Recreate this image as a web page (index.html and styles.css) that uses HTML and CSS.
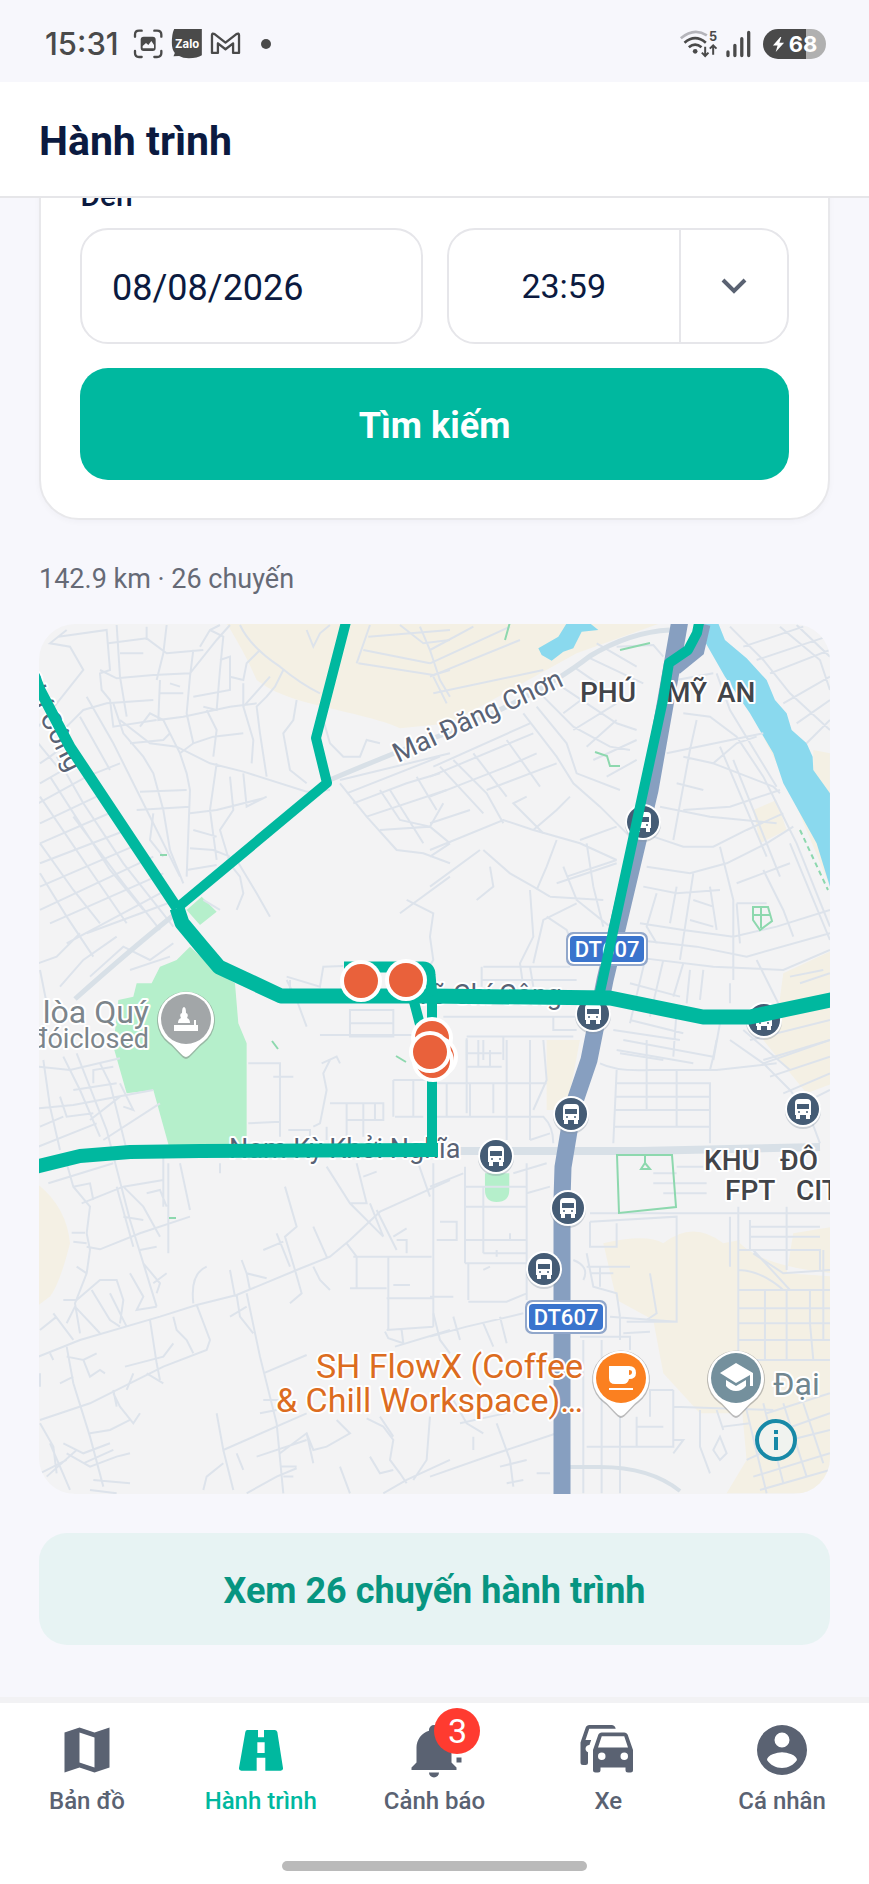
FILE: index.html
```html
<!DOCTYPE html>
<html lang="vi">
<head>
<meta charset="utf-8">
<meta name="viewport" content="width=device-width, initial-scale=1">
<title>Hành trình</title>
<link rel="stylesheet" href="styles.css">
</head>
<body>
<div class="status">
  <div class="status-group">
    <span class="clock">15:31</span>
    <svg class="ic-shot" viewBox="402 89 90 90" aria-hidden="true"><g fill="none" stroke="#4a4a4a" stroke-width="7" stroke-linecap="round"><path d="M408 112V106Q408 94 420 94H428M466 94H474Q487 94 487 106V112M487 155V161Q487 173 474 173H466M428 173H420Q408 173 408 161V155"/></g><rect x="425" y="112" width="45" height="43" rx="9" fill="#4a4a4a"/><path d="M431 147V140L441 131L448 137L457 125L465 137V147Z" fill="#f7f7fb"/></svg>
    <svg class="ic-zalo" viewBox="517 87 92 90" aria-hidden="true"><path d="M526 87H609V166Q596 175 570 175Q552 175 541 168L524 169L528 159Q519 148 519 128Q519 102 526 87Z" fill="#4a4a4a"/><text x="565" y="143" class="zalo-text">Zalo</text></svg>
    <svg class="ic-mail" viewBox="628 89 94 88" aria-hidden="true"><path d="M634 160V106Q634 99 642 103L675 129L708 103Q716 99 716 106V160H698V131L675 149L652 131V160Z" fill="none" stroke="#4a4a4a" stroke-width="7" stroke-linejoin="round"/></svg>
    <span class="more-dot"></span>
  </div>
  <div class="status-group status-right">
    <svg class="ic-wifi" viewBox="736 87 116 90" aria-hidden="true"><g fill="none" stroke-width="8"><path d="M741 115Q780 82 819 106" stroke="#b4b4ba"/><path d="M752 128Q784 101 816 128M765 142Q784 126 803 142" stroke="#4a4a4a"/><path d="M814 140V167M804 158L814 168L824 158M838 164V137M828 146L838 136L848 146" stroke="#4a4a4a" stroke-width="6"/></g><circle cx="784" cy="154" r="7" fill="#4a4a4a"/><text x="838" y="122" class="wifi-text">5</text></svg>
    <svg class="ic-signal" viewBox="876 87 76 90" aria-hidden="true"><path d="M882 156V167M903 136V167M924 116V167M945 97V167" stroke="#4a4a4a" stroke-width="10" stroke-linecap="round"/></svg>
    <span class="battery"><svg viewBox="0 0 14 18" aria-hidden="true"><path d="M9 1L1 10H6L4 17L13 7H8L10 1Z" fill="#fff"/></svg>68</span>
  </div>
</div>

<header class="header"><h1>Hành trình</h1></header>

<main class="main">
  <form class="card">
    <label class="label" for="to-date">Đến</label>
    <div class="fields">
      <input class="field date" id="to-date" type="text" value="08/08/2026">
      <div class="field time">
        <input class="time-input" type="text" value="23:59" aria-label="Giờ đến">
        <button class="time-toggle" type="button" aria-label="Chọn giờ"><svg viewBox="0 0 26 16"><path d="M2 2L13 13L24 2" fill="none" stroke="#5a6272" stroke-width="4"/></svg></button>
      </div>
    </div>
    <button class="search" type="button">Tìm kiếm</button>
  </form>

  <p class="summary">142.9 km · 26 chuyến</p>

  <section class="map" aria-label="Bản đồ hành trình">
    <svg class="map-canvas" viewBox="39 624 791 870">
      <defs>
        <g id="bus">
          <circle r="18" fill="#8795a4" opacity=".35" cy="2"/><circle r="18" fill="#fff"/><circle r="16" fill="#455c75"/>
          <path d="M-8 -6Q-8 -10 -4 -10H4Q8 -10 8 -6V6H7V10H3V6H-3V10H-7V6H-8Z" fill="#fff"/><rect x="-6" y="-5" width="12" height="5" fill="#455c75"/><circle cx="-4" cy="3" r="1" fill="#455c75"/><circle cx="4" cy="3" r="1" fill="#455c75"/>
        </g>
        <g id="pin"><path d="M0 40C-4 40 -9 31 -17 25A29 29 0 1 1 17 25C9 31 4 40 0 40Z" fill="#777" opacity=".45"/><path d="M0 38C-4 38 -9 29 -17 23A28 28 0 1 1 17 23C9 29 4 38 0 38Z" fill="#fff"/></g>
        <g id="shield"><rect x="-41" y="-17" width="82" height="34" rx="7" fill="#91a7cb"/><rect x="-39" y="-15" width="78" height="30" rx="6" fill="#fff"/><rect x="-37" y="-13" width="74" height="26" rx="4" fill="#3a74cd"/><text class="shield-text" y="8">DT607</text></g>
        <g id="stop"><circle r="21" fill="#fff"/><circle r="17" fill="#e9613b"/></g>
      </defs>
      <rect x="39" y="624" width="791" height="870" fill="#f3f3f4"/>

      <g class="land" transform="translate(30 610) scale(.3333)">
        <path d="M590 40C620 90 650 140 680 210C720 240 760 260 860 285C960 310 1060 330 1110 355L1260 340L1640 130L1890 40Z"/>
        <path d="M2040 40L2080 90L2110 200Q2150 250 2160 300L2280 540L2400 830V780L2280 480L2050 130Z"/>
        <path d="M2350 420L2400 430V560L2350 500ZM2170 600L2240 570L2270 660L2190 700ZM2260 1090L2410 1020V1420L2330 1450L2200 1290L2240 1240ZM1550 1290H1650L1610 1500H1550Z"/>
        <path d="M20 1720Q110 1790 120 1900Q90 2020 60 2060L20 2090ZM1720 1900Q1850 1870 1900 1900Q1990 1830 2080 1900L2130 1890V2330L2110 2410H2010L1900 2290L1870 2130L1760 2070Z"/>
        <path d="M2130 1900Q2200 1970 2410 1990V1850L2290 1870L2270 1990L2410 2000V2650H2090L2150 2550L2130 2330Z"/>
      </g>
      <g fill="#b5efcb" transform="translate(30 610) scale(.3333)">
        <path d="M480 1010L560 1085L615 1120L625 1240L650 1300V1620H420L370 1440L290 1450L250 1310L265 1170L310 1160L320 1120L365 1120L390 1070L440 1050Z"/>
        <path d="M470 900L515 860L560 905L510 945ZM1365 1690H1438V1740Q1438 1776 1400 1776Q1365 1776 1365 1740Z"/>
      </g>
      <g fill="#8ad9ee" transform="translate(430 610) scale(.3333)">
        <path d="M410 40L385 80L325 115L335 135L365 152L400 125L430 115L455 65L505 60L480 40Z"/>
        <path d="M820 40H865L885 90L950 145L1010 210L1035 270L1070 310L1085 360L1130 400L1148 440L1150 480L1200 550V830L1160 700L1110 610L1060 520L1030 430L960 310L885 200L825 95Z"/>
      </g>

      <g class="streets" transform="translate(30 610) scale(.3333)">
        <path d="M25 350L160 180L120 110L60 100L110 60M85 80L230 60L240 180L210 190L215 240L240 270L250 350L380 330M235 100L350 85L410 130L520 120M260 45L270 200L290 320M350 50V90M410 45L400 130L380 210M270 130H340M210 180L260 205L370 195L480 190L560 90L600 45M510 110L540 60L570 45M540 60L580 80L570 180L560 300L520 290M570 150L600 140V240L490 260M390 210L385 330L460 320L600 290L680 280M490 120L480 200L470 310L490 400M600 200L640 210L650 160L690 120M640 220V290L670 390L665 460M640 290L720 200M460 250L390 250M420 220L450 230"/>
        <path d="M630 45Q660 110 750 170Q810 220 870 250M760 180L735 230L710 260L680 290L690 370L710 500M800 270L790 330L760 370L780 480L830 520M830 60L850 110L870 70L900 45M270 330L360 400L440 410L540 460L640 485L830 545L900 540M250 280L280 370L340 440L370 490L400 600L420 720L460 820M330 350L360 310L400 330L450 430L470 490L480 540L470 800M300 400L400 390L420 370M450 430L490 400L550 380L640 370M530 300L560 360L550 440M560 460L540 600L560 750M600 500L610 600L570 660L600 760M640 490L650 590L710 560M480 610L560 600L700 565M490 660L560 680M480 715L550 720L600 740M470 780L560 765M330 545L470 540M320 600L480 590M370 610L360 690L400 740M880 330L900 400L940 440H990L1010 390L1050 400"/>
        <path d="M30 460L60 440L100 410M30 520L100 480L170 470M25 580L170 500L270 460M30 640L220 550M30 700L260 600M30 760L290 660M30 830L330 700M30 900L370 740M60 940L400 790M110 1000L410 840M170 970L440 870M30 560L180 780L290 940M60 500L240 780L340 900M130 620L280 820L390 960M30 700L130 840L210 940M30 790L110 920L190 1040M80 440L160 580L280 760L430 950M25 400L90 480M170 260L250 400L350 600L450 800M150 320L240 480M110 350L160 300L230 280L370 270M25 1060L80 1040L150 970M90 1130L160 1050L260 980M30 1080L60 1230M180 1100L280 1010L360 1050L430 1000M300 1080L420 1040"/>
        <path d="M590 750L630 800L640 850L620 900M620 750L680 850L720 920M520 870L570 900M770 1110L800 1170L830 1250M1110 910L1260 800M1130 870L1210 910L1200 980L1210 1050L1180 1100"/>
        <path d="M930 510L1260 430M950 550L1230 440M930 520L1010 620L1100 720L1180 730L1260 760M970 580L1130 520L1230 490M1050 540L1110 630L1200 650L1240 580M1010 620L1250 540M1050 660L1200 650L1260 700M1080 540L1180 700M1160 500L1220 600M980 160L1020 45M985 160L1210 195L1260 180M1000 120L1200 160M1015 80L1260 60M1170 50L1200 120L1230 210L1260 260M1110 45L1180 100L1260 90M770 1100L870 1130L880 1070L940 1068M780 1110V1150M960 1200H1090V1280H960ZM960 1240H1090M870 1275H1150"/>
      </g>

      <g class="streets" transform="translate(430 610) scale(.3333)">
        <path d="M0 160L240 50M0 200L270 90M10 250L340 180M0 120L130 50M10 200L50 280M10 470L300 340M0 500L310 370M30 470L160 610M70 450L170 550L220 640M130 430L230 560M230 390L330 530M0 560L230 470L320 430M170 540L380 460M280 310L380 440L430 520L510 590L600 680M320 290L410 400L440 490L570 540M340 260L430 350L540 410L600 420M380 220L560 340L620 360M430 170L590 280M470 140L640 220M500 100L620 170M400 310L480 250M430 360L560 280M470 410L560 330M490 450L620 390M530 500L620 450M560 110L670 105L700 140M0 720L220 630L310 660L450 700L560 750M0 640L120 600M0 740L60 700M160 720L240 790L310 830L360 860M310 660L380 600L420 560M340 670L250 580L290 560M380 690L350 770L320 840M450 690L560 650M560 750L410 800M400 770L440 870L540 950M470 700L490 830L520 950M380 820L500 780L560 760M360 860L520 870M440 880L340 930L310 1060M300 840L310 980L270 1060L280 1130M180 770L190 830L140 870M350 920L410 960L450 1060M0 830L150 720"/>
        <path d="M900 50L1000 150L1080 250L1200 360M940 110L1120 50M980 150L1190 80M1020 190L1200 120M1050 50L1170 150L1200 240M1100 45L1200 140M1060 280L1200 200M1100 340L1200 270M1130 400L1200 330M760 310L840 320L920 380L1000 500L1050 600L1100 700L1200 950M800 330L780 420L730 690M760 440L850 460L920 400L980 380M710 430L1000 370M850 460L1030 530L1050 550M870 410L1010 740M910 450L970 600L1050 800M740 520L820 540M760 600L900 590L1050 540M670 680L760 710L850 710L950 660L1060 610M700 300L740 210L850 190M860 190L900 300L1040 530M690 590L840 620L1040 640M870 710L890 790L910 870V1110M890 760L1010 700L1090 650M920 820L1080 760M920 880H1010M650 770L780 790L890 760M640 830L740 850L870 840M790 790L750 1050M740 830L720 940M840 830L860 960M630 940L760 960L910 980L1040 950L1200 900M620 990L800 1010L950 1040L1200 970M600 1040L850 1070L1060 1080L1200 1020M680 850L650 950L680 1000M790 870L850 890M780 930L850 950M920 880L930 1000M1000 780L1060 900L1090 980M1080 700L1200 990M980 1050L1060 1210M1080 1100L1180 1080M1110 1120L1200 1090M600 1120L750 1160M600 1180L740 1200L730 1340M600 1230L760 1270M550 1260L750 1290M560 1320L790 1360M870 1240L850 1350M650 1030L600 1240M700 1050L660 1220M760 1060L730 1160M780 1080L770 1180M820 1080L810 1170M900 1120V1180"/>
        <path d="M160 1070H420M155 1110H440M155 1070V1130M300 1070L310 1130M40 1220H440M110 1280H430M110 1285V1350M160 1290V1350M220 1280V1350M370 1220V1260H440M940 1260L1080 1380M1000 1350L1200 1290M960 1290L1200 1230"/>
      </g>

      <g class="streets" transform="translate(30 1040) scale(.3333)">
        <path d="M40 60L60 200L90 330M100 50L150 150L210 290M140 40L230 270L300 540L380 800M210 70L240 130L290 330M25 80L120 90L270 55M130 150L260 130M25 205L130 195L370 150M90 170L110 230L190 220M180 240L270 170M220 300L390 190M25 320L200 250M30 260L100 230M270 130L310 210L280 200M190 130L190 90L250 80M400 330V500M55 430L250 370M110 370L130 440L180 500L170 580L180 630L170 700L135 790L150 880M130 440L180 430L190 480M155 490L280 440L400 420M280 440L340 500L390 590M260 440L310 620M350 460L390 450L410 500M280 530L340 540M170 620L210 628L330 580L480 530M125 578H165M130 605L170 610M450 370L480 510M415 370V640M570 370V400M330 630L380 620M340 670L390 730L380 760M100 780H140L210 720L260 720L280 780L270 850M185 750L240 840L270 860M240 760L290 860M70 820L130 900M30 870L80 830M110 850L135 800L210 880M300 700L340 770L320 810L380 800M370 730L410 700M140 680L170 700"/>
        <path d="M25 950L150 900L390 830L500 795L620 765L800 690L900 650L960 600L1050 515L1150 470L1260 420M360 840L380 970L390 1020M430 830L440 870L470 900L490 940M500 795L540 900L530 930L400 980L180 1090L30 1140M490 790Q480 700 530 680M600 690L615 770M620 765L630 830L670 880M650 760L690 950L740 1150L760 1360M650 700L660 750M635 660L650 700L710 715M600 830L650 800M765 440L800 560L765 590L795 690L815 760L780 790M740 580L780 680M700 630L760 605M850 560L890 650L890 655M850 680L870 720L900 750M700 1000L830 945M830 1120L580 1230L560 1120M580 1230L610 1350M520 1350L530 1310L580 1270M620 1240L640 1290M680 1250L830 1200M650 1360L740 1310L800 1285M750 1240L830 1180L850 1230L890 1220L960 1180L920 1140M830 1180L850 1270M1010 1135L1060 1160L1090 1200L1080 1260L1110 1300L1130 1330M1050 1130L1090 1190M1200 1130L1190 1260L1150 1320M1060 1360L1130 1320L1260 1260M1020 1250L1050 1300L1090 1290M930 1280L960 1360M700 1080L750 1080M690 1120L740 1110M750 1280H800M760 1310L790 1310"/>
        <path d="M110 920L130 1030L180 1190L220 1340M110 950L160 960L200 940M160 960L180 1010L210 990L225 1000M285 980L400 950L430 910M310 1000L290 1050M90 1030L130 1010M60 940L70 960M250 1060L270 1100L310 1150L330 1120M180 1180L240 1170L300 1140M100 1210L160 1240L240 1210M160 1270L250 1230M110 1240L180 1280L260 1250L300 1240M60 1210L90 1280L120 1350M30 1150L70 1220L80 1300M190 1320L300 1330M180 1350L260 1360M50 1310L140 1230M30 1000V1040M30 1300L110 1260M250 1050L260 1100M350 1000L400 1030"/>
        <path d="M655 70H750V290M655 250L750 245M730 110H790M875 70L920 50L930 70M900 60L880 100L890 150L870 250L850 260M900 190H1060V240H950V190M1035 190V240M950 240V290M890 260V300M775 270H840V290M1090 120H1200M1095 230H1180M1150 120V230M1090 120V230M1000 190V290M890 380L960 490L1060 590M980 370L1010 490L960 490M1000 410L1040 395M1020 490L1060 590M1210 370V860M1165 370L1200 470M970 650H1205M980 650V745M960 745H1070M1075 650V870M1070 775H1210M1070 870L1210 860M1095 920L1260 870M1065 875L1075 895L1120 910L1115 870M1100 600H1130V640M1040 510L1100 630M1090 590L1130 565M1090 735H1140M950 610L980 650"/>
      </g>

      <g class="streets" transform="translate(430 1040) scale(.3333)">
        <path d="M110 0V220M145 0V80M180 30V80M230 0V300M110 40H215M110 80H215M20 130H350M50 130V230M120 130V230M190 130V220M300 0V300M20 230H340Q370 260 370 310M340 0L350 120L310 210M300 300L360 280M0 440L100 400M105 380V670M290 370V780M160 440V640M105 440H290M105 500H290M105 600H290M30 545H80V600H20M105 670H290M160 640H290M115 670V780M115 785H230L290 760M0 770H70M0 890L110 860L280 820M10 820L30 900L60 940M70 830L90 900M160 850L190 920M210 830L230 910M240 580V600M200 630V650M160 690L180 680M250 400L350 370M290 460L360 440"/>
        <path d="M510 70Q560 95 660 90H860L1040 70M560 90L550 310M555 130H840V310M555 170H840M555 210H840M555 260H840M650 0V210M740 90V260M580 0L850 50L840 90M570 40L700 60M860 0L850 50M900 0L1000 70L1080 150L1140 230L1170 310M1000 70L1200 0M1020 110L1200 50M1060 160L1200 100M1100 200L1200 150M740 380H820M670 400H740M670 430H830M700 460H830M480 520H1200M480 545L740 530V845H590M480 545V620H560V550M470 640L490 740L560 760L570 830M430 660Q480 680 460 720M470 680H600M480 700H550M510 680V740M660 700L680 820L650 840M540 830L740 845M580 880L660 875M570 830V900M450 890H600V930M460 900V1360M515 900V1360M570 1130V1360M620 1130V1220H730V1050M470 1220H730M620 1160H700M730 1100L1030 1110M900 530V680M925 500V1030M925 630H1170V690M960 540V630M1070 500V690M960 560H1170M960 590H1170M925 630H970L1080 750H1200M925 690Q990 690 1060 750M970 640L1060 700L1200 690M925 750H1080M925 805H1200M925 850H1200M925 900H1200M925 960H1200M1005 750V960M1070 750V960M1140 750V850L1150 960M1180 630V900"/>
        <path d="M70 1080L110 1150L160 1180M90 1150L180 1130M130 1190L130 1230M0 1310L200 1240L380 1180M200 1150L240 1260L250 1340M210 1280L290 1260M230 1330L280 1320M180 1130L270 1110M320 1300H360M810 1110V1220L840 1300M860 1110L880 1170M850 1230L870 1190L890 1240L870 1260ZM880 1160L960 1150M940 1070L1010 1360M1010 1120L1200 1060M1030 1180L1200 1120M950 1260L1080 1200L1200 1170M970 1310L1200 1240M990 1350L1200 1290M1060 1090L1130 1310M1120 1090L1180 1270M1000 1090L1060 1330M730 1200H760L730 1240M660 1130V1050H730"/>
      </g>

      <g class="roads">
        <path d="M75 999Q130 950 175 914M325 782Q400 750 450 732Q540 695 590 656Q630 632 670 630" stroke-width="5"/>
        <path d="M430 1151H640L820 1147" stroke-width="8"/><path d="M570 1467H600Q650 1467 680 1491" stroke-width="4"/>
      </g>
      <path d="M680 620L673 660L650 790L605 980L589 1060L573 1107L563 1167L562 1200V1500" fill="none" stroke="#879fc0" stroke-width="17"/>
      <path d="M703 624L697 650L675 668" fill="none" stroke="#879fc0" stroke-width="15"/>
      <g fill="none" stroke="#8dd8ae" stroke-width="2">
        <path d="M617 1155H672L676 1207L619 1213ZM645 1155V1163M641 1169L645 1163L650 1169ZM595 752L607 756L610 766L620 766M753 907H768L772 921L760 930L753 920ZM753 915H771M761 907V928M620 650L650 643M505 640L510 622M272 1041L278 1049M396 1056L406 1062M160 855H167M169 1218H176"/>
        <path d="M800 830L828 890" stroke-dasharray="5 4"/>
      </g>

      <g class="map-label small">
        <text x="398" y="763" transform="rotate(-25 398 763)">Mai Đăng Chơn</text>
        <text x="68" y="773" text-anchor="end" transform="rotate(63 68 773)">Võ Chí Công</text>
        <text x="562" y="1004" text-anchor="end">Võ Chí Công</text>
        <text x="229" y="1158">Nam Kỳ Khởi Nghĩa</text>
      </g>
      <g class="map-label area">
        <text y="702"><tspan x="580">PHÚ</tspan> <tspan x="666">MỸ</tspan> <tspan x="717">AN</tspan></text>
        <text y="1170"><tspan x="704">KHU</tspan> <tspan x="780">ĐÔ</tspan></text>
        <text y="1200"><tspan x="725">FPT</tspan> <tspan x="796">CITY</tspan></text>
      </g>
      <g class="map-label place">
        <text x="149" y="1023" text-anchor="end">lòa Quý</text>
        <text class="sub" x="149" y="1048" text-anchor="end">đóiclosed</text>
        <text class="school" x="773" y="1395">Đại</text>
        <text class="cafe" x="583" y="1378" text-anchor="end">SH FlowX (Coffee</text>
        <text class="cafe" x="583" y="1412" text-anchor="end">&amp; Chill Workspace)…</text>
      </g>

      <use href="#shield" x="607" y="949"/><use href="#shield" x="566" y="1317"/>
      <use href="#bus" x="643" y="822"/><use href="#bus" x="593" y="1014"/><use href="#bus" x="764" y="1020"/><use href="#bus" x="571" y="1114"/>
      <use href="#bus" x="496" y="1156"/><use href="#bus" x="568" y="1208"/><use href="#bus" x="544" y="1269"/><use href="#bus" x="803" y="1109"/>

      <g transform="translate(186 1019)"><use href="#pin"/><circle r="25" fill="#a2a6a8"/><path d="M-12 6H12V12H-12ZM-8 4Q-8 0 -5 -1Q-7 -5 -4 -6Q-4 -12 -2 -12Q0 -12 0 -6Q3 -5 1 -1Q4 0 4 4ZM8 1H10V8H8Z" fill="#fff"/></g>
      <g transform="translate(621 1378)"><use href="#pin"/><circle r="25" fill="#fb8020"/><path d="M-12 -12H8Q15 -12 15 -5Q15 1 8 1Q7 6 2 6H-6Q-12 6 -12 0ZM8 -8V-3Q11 -3 11 -6Q11 -8 8 -8ZM-12 10H12V12H-12Z" fill="#fff" fill-rule="evenodd"/></g>
      <g transform="translate(736 1378)"><use href="#pin"/><circle r="25" fill="#74909d"/><path d="M0 -15L17 -5V8H14V-3L0 5L-16 -5ZM-10 2L0 8L10 2V8Q6 13 0 13Q-6 13 -10 8Z" fill="#fff"/></g>

      <g class="route">
        <path d="M30 665L40 690L70 747L177 908" stroke-width="11"/>
        <path d="M347 618L316 738L327 783L177 908" stroke-width="10"/>
        <path d="M177 908L182 923L202 947L219 967L281 996H430L610 998L703 1017H750L835 999" stroke-width="15"/>
        <path d="M700 618L697 633L688 650L669 663L663 700L600 992" stroke-width="10"/>
        <path d="M344 967H423Q430 967 430 975L432 996" stroke-width="11"/>
        <path d="M413 998L422 1032M432 998V1150" stroke-width="10"/>
        <path d="M35 1167L80 1156L130 1152L200 1151L438 1150" stroke-width="14"/>
      </g>
      <use href="#stop" x="361" y="981"/><use href="#stop" x="406" y="980"/>
      <use href="#stop" x="432" y="1038"/><use href="#stop" x="437" y="1057"/><use href="#stop" x="433" y="1061"/><use href="#stop" x="430" y="1052"/>
    </svg>
    <button class="info" type="button" aria-label="Thông tin bản đồ"><svg viewBox="0 0 44 44"><circle cx="22" cy="22" r="19" fill="#f0f3ef" stroke="#1789a7" stroke-width="4"/><path d="M22 19V32M22 12V16" stroke="#1789a7" stroke-width="4"/></svg></button>
  </section>

  <button class="trips" type="button">Xem 26 chuyến hành trình</button>
</main>

<nav class="tabs">
  <div class="tab-row">
    <a class="tab" href="#map"><svg viewBox="0 0 24 24"><path fill-rule="evenodd" d="M3 5L9 3L15 5L21 3V19L15 21L9 19L3 21ZM9 5V17L15 19V7Z"/></svg>Bản đồ</a>
    <a class="tab active" href="#trips" aria-current="page"><svg viewBox="693 660 180 180"><path fill-rule="evenodd" d="M742 690H774V712H792V690H824Q830 690 832 696L849 804Q850 812 842 812H796V773H770V812H724Q716 812 717 804L736 696Q737 690 742 690ZM772 727V759H794V727Z"/></svg>Hành trình</a>
    <a class="tab" href="#alerts"><span class="bell"><svg viewBox="0 0 24 24"><path d="M23 7V13H21V7ZM21 15H23V17H21ZM21 19V20H3V19L5 17V11C5 7.9 7.03 5.17 10 4.29V4A2 2 0 0 1 14 4V4.29C16.97 5.17 19 7.9 19 11V17ZM14 21A2 2 0 0 1 10 21Z"/></svg><span class="badge">3</span></span>Cảnh báo</a>
    <a class="tab" href="#vehicles"><svg viewBox="0 0 24 24"><path fill-rule="evenodd" d="M8 11L9.500 6.500H18.500L20 11M18.500 16A1.500 1.500 0 0 1 18.500 13A1.500 1.500 0 0 1 18.500 16M9.500 16A1.500 1.500 0 0 1 9.500 13A1.500 1.500 0 0 1 9.500 16M19.920 6C19.710 5.400 19.140 5 18.500 5H9.500C8.860 5 8.290 5.400 8.080 6L6 12V20A1 1 0 0 0 7 21H8A1 1 0 0 0 9 20V19H19V20A1 1 0 0 0 20 21H21A1 1 0 0 0 22 20V12ZM14.920 3C14.710 2.400 14.140 2 13.500 2H4.500C3.860 2 3.290 2.400 3.080 3L1 9V17A1 1 0 0 0 2 18H3A1 1 0 0 0 4 17V12.910C3.220 12.630 2.820 11.770 3.100 11C3.320 10.400 3.870 10 4.500 10H4.570L5.270 8H3L4.500 3.500H15.090Z"/></svg>Xe</a>
    <a class="tab" href="#profile"><svg viewBox="0 0 24 24"><path fill-rule="evenodd" d="M12 2A10 10 0 0 1 12 22A10 10 0 0 1 12 2ZM12 5A3 3 0 0 0 12 11A3 3 0 0 0 12 5ZM12 19.200C14.500 19.200 16.710 17.920 18 16C17.970 14 14 12.900 12 12.900C10 12.900 6.030 14 6 16C7.290 17.920 9.500 19.200 12 19.200Z"/></svg>Cá nhân</a>
  </div>
  <div class="gesture"></div>
</nav>
</body>
</html>
```

FILE: styles.css
```css
* { box-sizing: border-box; }
body {
  margin: 0;
  min-height: 100vh;
  display: flex;
  flex-direction: column;
  background: #f7f7fc;
  color: #0b1a40;
  font-family: Roboto, "Noto Sans", sans-serif;
}
button, input { font: inherit; color: inherit; margin: 0; border: 0; background: none; padding: 0; }
svg { display: block; }

.status {
  height: 82px;
  padding: 6px 43px 0 45px;
  display: flex;
  justify-content: space-between;
  align-items: center;
  color: #4a4a4a;
}
.status-group { display: flex; align-items: center; gap: 8px; }
.clock { font: 500 31px/36px Inter, sans-serif; margin-right: 6px; }
.ic-shot { width: 30px; height: 30px; }
.ic-zalo { width: 31px; height: 30px; }
.ic-mail { width: 31px; height: 30px; }
.zalo-text { font: 700 34px Inter, sans-serif; fill: #fff; text-anchor: middle; }
.more-dot { width: 10px; height: 10px; border-radius: 50%; background: #4a4a4a; margin-left: 12px; }
.ic-wifi { width: 39px; height: 30px; }
.wifi-text { font: 700 38px Inter, sans-serif; fill: #4a4a4a; text-anchor: middle; }
.ic-signal { width: 25px; height: 30px; }
.battery {
  width: 63px;
  height: 30px;
  margin-left: 4px;
  border-radius: 15px;
  display: flex;
  align-items: center;
  justify-content: center;
  gap: 4px;
  background: linear-gradient(90deg, #4a4a4a 68%, #b0b0b0 68%);
  color: #fff;
  font: 700 22px/30px Inter, sans-serif;
}
.battery svg { width: 13px; height: 17px; }

.header {
  height: 116px;
  padding: 4px 39px 0;
  display: flex;
  align-items: center;
  background: #fff;
  border-bottom: 2px solid #e6e6e9;
}
h1 { margin: 0; font-size: 41px; line-height: 48px; font-weight: 700; }

.main { padding: 0 39px 50px; overflow: hidden; flex: 1; }
.card {
  margin-top: -62px;
  padding: 40px 39px 38px;
  background: #fff;
  border: 2px solid #e8e8eb;
  border-radius: 40px;
  box-shadow: 0 2px 6px rgba(20, 30, 60, .03);
}
.label { display: block; font-size: 30px; line-height: 36px; font-weight: 500; margin-bottom: 14px; }
.fields { display: grid; grid-template-columns: repeat(2, minmax(0, 1fr)); gap: 24px; margin-bottom: 24px; }
.field { width: 100%; height: 116px; border: 2px solid #e6e6ea; border-radius: 28px; background: #fff; }
.date { padding: 4px 30px 0; font-size: 36px; }
.time { display: flex; }
.time-input { flex: 1; min-width: 0; text-align: center; font-size: 34px; }
.time-toggle { width: 108px; border-left: 2px solid #e6e6ea; display: flex; align-items: center; justify-content: center; }
.time-toggle svg { width: 26px; height: 16px; }
.search, .trips { display: block; width: 100%; height: 112px; padding-top: 4px; border-radius: 28px; font-size: 36px; font-weight: 700; }
.search { background: #00b89f; color: #fff; }

.summary { margin: 42px 0 28px; font-size: 27px; line-height: 34px; color: #666a76; }

.map { position: relative; border-radius: 36px; overflow: hidden; }
.map-canvas { width: 100%; height: auto; }
.land { fill: #f4f0e4; }
.streets { fill: none; stroke: #dde3eb; stroke-width: 6; }
.roads { fill: none; stroke: #d8e0e7; }
.route { fill: none; stroke: #00b89f; stroke-linejoin: round; }
.map-label { font-family: Roboto, "Noto Sans", sans-serif; paint-order: stroke; stroke: #fff; stroke-width: 4px; stroke-linejoin: round; }
.small { font-size: 27px; fill: #596274; }
.area { font-size: 28px; font-weight: 500; fill: #424449; }
.place { font-size: 32px; fill: #7c858b; }
.place .sub { font-size: 27px; }
.place .school { fill: #708690; }
.place .cafe { font-size: 34px; fill: #dc6c20; }
.shield-text { font: 500 22px Roboto, sans-serif; fill: #fff; text-anchor: middle; }
.info { position: absolute; right: 32px; bottom: 32px; width: 44px; height: 44px; }

.trips { margin-top: 39px; background: #e7f3f3; color: #079581; }

.tabs { background: #fff; border-top: 6px solid #f2f2f4; padding: 17px 0 13px; }
.tab-row { display: grid; grid-template-columns: repeat(5, 1fr); }
.tab { display: flex; flex-direction: column; align-items: center; gap: 6px; color: #5a6272; font-size: 24px; line-height: 30px; font-weight: 500; text-decoration: none; }
.tab svg { width: 60px; height: 60px; fill: currentColor; }
.tab.active { color: #00b89f; }
.bell { position: relative; }
.badge {
  position: absolute;
  top: -12px;
  left: 30px;
  width: 46px;
  height: 46px;
  border-radius: 50%;
  background: #ff3b30;
  color: #fff;
  text-align: center;
  font-size: 34px;
  line-height: 46px;
  font-weight: 400;
}
.gesture { width: 35%; height: 10px; margin: 45px auto 0; border-radius: 5px; background: #bababa; }
```
